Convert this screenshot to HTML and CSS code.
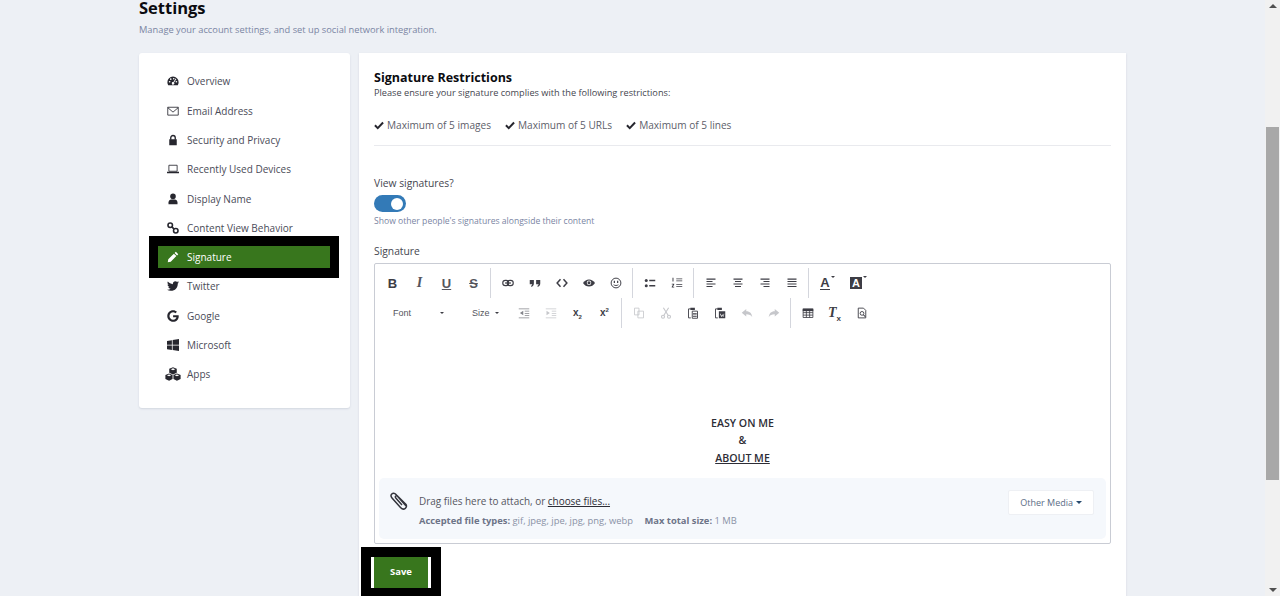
FILE: index.html
```html
<!doctype html>
<html>
<head>
  <title>Settings</title>
  <link rel="stylesheet" href="styles.css">
</head>
<body>
  <svg class="defs" width="0" height="0">
    <symbol id="i-overview" viewBox="0 0 16 16"><path d="M8 2a7.5 7.5 0 0 0-7.5 7.5c0 1.500.4 2.800 1.100 4h12.800c.7-1.200 1.100-2.500 1.100-4A7.500 7.500 0 0 0 8 2z"/><g fill="#fff"><circle cx="3.500" cy="9" r="1.100"/><circle cx="5" cy="5.500" r="1.100"/><circle cx="12.500" cy="9" r="1.100"/><circle cx="9" cy="5" r="1.100"/><path d="M11.500 4.800l1 .6-3.100 4.700a1.700 1.700 0 1 1-1.100-.6z"/></g></symbol>
    <symbol id="i-mail" viewBox="0 0 16 16"><path fill="none" stroke="currentColor" stroke-width="1.100" d="M1 3h14v10.500H1zM1 3.500l7 6 7-6"/></symbol>
    <symbol id="i-lock" viewBox="0 0 16 16"><path d="M3 7h10v8H3z"/><path fill="none" stroke="currentColor" stroke-width="1.800" d="M5 7.500V5a3 3 0 0 1 6 0v2.500"/></symbol>
    <symbol id="i-laptop" viewBox="0 0 16 16"><path fill="none" stroke="currentColor" stroke-width="1.100" d="M2.500 3h11v8h-11z"/><path d="M0 11.500h16V13a.7.7 0 0 1-.7.7H.7A.7.7 0 0 1 0 13z"/></symbol>
    <symbol id="i-user" viewBox="0 0 16 16"><circle cx="8" cy="4.500" r="3.700"/><path d="M2 15v-2.500C2 10 4 8.500 5.500 8.500h5c1.500 0 3.500 1.500 3.500 4V15z"/></symbol>
    <symbol id="i-link" viewBox="0 0 16 16"><g fill="none" stroke="currentColor" stroke-width="2.100"><circle cx="4.300" cy="4.300" r="3"/><circle cx="11.700" cy="11.700" r="3"/><path d="M6.500 6.500l3 3"/></g></symbol>
    <symbol id="i-pencil" viewBox="0 0 16 16"><path d="M11.800 1l3.200 3.200-1.600 1.700-3.300-3.300zM9.200 3.500l3.300 3.300L5 14.300 1 15l.7-4z"/></symbol>
    <symbol id="i-twitter" viewBox="0 0 512 512"><path d="M459.37 151.716c.325 4.548.325 9.097.325 13.645 0 138.72-105.583 298.558-298.558 298.558-59.452 0-114.68-17.219-161.137-47.106 8.447.974 16.568 1.299 25.34 1.299 49.055 0 94.213-16.568 130.274-44.832-46.132-.975-84.792-31.188-98.112-72.772 6.498.974 12.995 1.624 19.818 1.624 9.421 0 18.843-1.3 27.614-3.573-48.081-9.747-84.143-51.98-84.143-102.985v-1.299c13.969 7.797 30.214 12.67 47.431 13.319-28.264-18.843-46.781-51.005-46.781-87.391 0-19.492 5.197-37.36 14.294-52.954 51.655 63.675 129.3 105.258 216.365 109.807-1.624-7.797-2.599-15.918-2.599-24.04 0-57.828 46.782-104.934 104.934-104.934 30.213 0 57.502 12.67 76.67 33.137 23.715-4.548 46.456-13.32 66.599-25.34-7.798 24.366-24.366 44.833-46.132 57.827 21.117-2.273 41.584-8.122 60.426-16.243-14.292 20.791-32.161 39.308-52.628 54.253z"/></symbol>
    <symbol id="i-google" viewBox="0 0 488 512"><path d="M488 261.8C488 403.3 391.1 504 248 504 110.8 504 0 393.2 0 256S110.8 8 248 8c66.8 0 123 24.5 166.3 64.9l-67.5 64.9C258.5 52.6 94.3 116.6 94.3 256c0 86.5 69.1 156.6 153.7 156.6 98.2 0 135-70.4 140.8-106.9H248v-85.3h236.1c2.3 12.7 3.900 24.9 3.900 41.4z"/></symbol>
    <symbol id="i-windows" viewBox="0 0 16 16"><path d="M0 2.500l6.500-1v6H0zM7.500 1.300L16 0v7.500H7.500zM0 8.500h6.500v6l-6.500-1zM7.500 8.500H16V16l-8.500-1.300z"/></symbol>
    <symbol id="i-cubes" viewBox="0 0 18 16"><path d="M9 .3l4.300 1.800v4.600L9 8.500 4.700 6.700V2.100zM9 1.500L6.400 2.500 9 3.600l2.600-1.100zM4.500 7.300l4 1.700v4.800l-4 1.900-4.200-1.900V9zM4.500 8.500L2 9.500l2.500 1 2.500-1zM13.500 7.300l4.200 1.700v4.800l-4.200 1.900-4-1.900V9zM13.500 8.500L11 9.500l2.500 1 2.500-1z" fill-rule="evenodd"/></symbol>
    <symbol id="i-check" viewBox="0 0 16 16"><path fill="none" stroke="currentColor" stroke-width="3.200" d="M1.500 8.500l4.500 4.500 8.500-9"/></symbol>
    <symbol id="i-chain" viewBox="0 0 16 16"><g fill="none" stroke="currentColor" stroke-width="1.500"><rect x="1" y="4.500" width="8" height="7" rx="3.500"/><rect x="7" y="4.500" width="8" height="7" rx="3.500"/><path d="M4 8h8"/></g></symbol>
    <symbol id="i-quote" viewBox="0 0 16 16"><path d="M1 4h5.500v4.500c0 2.500-1.500 4-3.500 4.500l-.5-1.200c1-.4 1.700-1.300 1.800-2.300H1zM9.500 4H15v4.500c0 2.500-1.500 4-3.500 4.500l-.5-1.200c1-.4 1.700-1.300 1.800-2.300H9.500z"/></symbol>
    <symbol id="i-code" viewBox="0 0 16 16"><path fill="none" stroke="currentColor" stroke-width="2" d="M6 3L1.500 8 6 13M10 3l4.500 5-4.500 5"/></symbol>
    <symbol id="i-eye" viewBox="0 0 16 16"><path d="M0 8c2-3 4.800-4.800 8-4.800S14 5 16 8c-2 3-4.800 4.800-8 4.800S2 11 0 8z"/><circle cx="8" cy="7.800" r="3" fill="#fff"/><circle cx="8" cy="7.800" r="2"/></symbol>
    <symbol id="i-smile" viewBox="0 0 16 16"><circle cx="8" cy="8" r="6.500" fill="none" stroke="currentColor" stroke-width="1.300"/><path d="M5 5h1.600v3H5zM9.400 5H11v3H9.400z"/><path fill="none" stroke="currentColor" stroke-width="1.200" d="M4.800 10.300c1.800 1.400 4.600 1.400 6.400 0"/></symbol>
    <symbol id="i-ul" viewBox="0 0 16 16"><circle cx="3" cy="4.500" r="2"/><circle cx="3" cy="11.500" r="2"/><path d="M7 3.500h8v2H7zM7 10.500h8v2H7z"/></symbol>
    <symbol id="i-ol" viewBox="0 0 16 16"><path d="M2 1h1.300v5H2zM1 9h3.300v1.100L2.500 13h1.800v1H1v-1l1.800-3H1zM7 2h8v1H7zM7 4.500h8v1H7zM7 9.500h8v1H7zM7 12h8v1H7z"/></symbol>
    <symbol id="i-left" viewBox="0 0 16 16"><path d="M2 2h12v1.500H2zM2 5.300h8v1.500H2zM2 8.600h12v1.500H2zM2 11.900h8v1.500H2z"/></symbol>
    <symbol id="i-center" viewBox="0 0 16 16"><path d="M2 2h12v1.500H2zM4 5.300h8v1.500H4zM2 8.600h12v1.500H2zM4 11.900h8v1.500H4z"/></symbol>
    <symbol id="i-right" viewBox="0 0 16 16"><path d="M2 2h12v1.500H2zM6 5.300h8v1.500H6zM2 8.600h12v1.500H2zM6 11.900h8v1.500H6z"/></symbol>
    <symbol id="i-justify" viewBox="0 0 16 16"><path d="M2 2h12v1.500H2zM2 5.300h12v1.500H2zM2 8.600h12v1.500H2zM2 11.900h12v1.500H2z"/></symbol>
    <symbol id="i-outdent" viewBox="0 0 16 16"><path d="M1 2h14v1H1zM9 5h6v1H9zM9 8h6v1H9zM9 11h6v1H9zM1 14h14v1H1zM7 5v6L2.500 8z"/></symbol>
    <symbol id="i-indent" viewBox="0 0 16 16"><path d="M1 2h14v1H1zM9 5h6v1H9zM9 8h6v1H9zM9 11h6v1H9zM1 14h14v1H1zM2 5v6l4.500-3z"/></symbol>
    <symbol id="i-copy" viewBox="0 0 16 16"><path fill="none" stroke="currentColor" stroke-width="1.100" d="M2 1.500h6v9H2zM6.500 5.500H14v9H6.500z"/></symbol>
    <symbol id="i-cut" viewBox="0 0 16 16"><g fill="none" stroke="currentColor" stroke-width="1.500"><circle cx="4" cy="13" r="2"/><circle cx="12" cy="13" r="2"/><path d="M5 11.300L11.500 1M11 11.300L4.500 1"/></g></symbol>
    <symbol id="i-paste" viewBox="0 0 16 16"><path fill="none" stroke="currentColor" stroke-width="1.200" d="M5 2.500H2v12h3M7 5.500h7v9.500H7z"/><path d="M4.500 1h6v3h-6zM8 8h5v1H8zM8 10h5v1H8zM8 12h5v1H8z"/></symbol>
    <symbol id="i-pastew" viewBox="0 0 16 16"><path fill="none" stroke="currentColor" stroke-width="1.200" d="M5 2.500H2v12h3"/><path d="M4.500 1h6v3h-6zM6.500 5.500H15V15H6.500z"/><path fill="#fff" d="M8 9h1l1 3 .8-2h.6l.8 2 .8-3h.8l-1.200 4h-.8l-.7-2-.8 2h-.8z"/></symbol>
    <symbol id="i-undo" viewBox="0 0 16 16"><path d="M7 2.500v3c5 0 7.500 3 8 8-1.500-3-4-4-8-4v3L1 7.500z"/></symbol>
    <symbol id="i-redo" viewBox="0 0 16 16"><path d="M9 2.500v3c-5 0-7.500 3-8 8 1.500-3 4-4 8-4v3l6-5z"/></symbol>
    <symbol id="i-table" viewBox="0 0 16 16"><path d="M1 2h14v3.500H1z"/><path fill="none" stroke="currentColor" stroke-width="1.100" d="M1.500 3h13v11h-13zM1.500 7.500h13M1.500 10.800h13M5.800 5v9M10.200 5v9"/></symbol>
    <symbol id="i-preview" viewBox="0 0 16 16"><path fill="none" stroke="currentColor" stroke-width="1.200" d="M3 1.500h7l3 3v10H3z"/><circle cx="8" cy="8.500" r="2.500" fill="none" stroke="currentColor" stroke-width="1.200"/><path fill="none" stroke="currentColor" stroke-width="1.400" d="M10 10.500l2.500 2.500"/></symbol>
    <symbol id="i-clip" viewBox="0 0 20 20"><path fill="none" stroke="currentColor" stroke-width="1.500" d="M16.500 16.500L6 4.500C4.500 2.800 2.800 3 1.800 4s-1 2.500.2 3.900l8.500 9.500c1.500 1.700 3.500 2 4.800 1s1.600-2.800.5-4.200L8 6.500c-.8-1-1.800-1-2.300-.5s-.5 1.300.3 2.200l6 6.800"/></symbol>
  </svg>

  <div class="page">
    <div class="wrap">
      <h1 class="title">Settings</h1>
      <p class="intro">Manage your account settings, and set up social network integration.</p>

      <div class="columns">
        <ul class="side">
          <li><svg class="ico"><use href="#i-overview"/></svg>Overview</li>
          <li><svg class="ico"><use href="#i-mail"/></svg>Email Address</li>
          <li><svg class="ico"><use href="#i-lock"/></svg>Security and Privacy</li>
          <li><svg class="ico"><use href="#i-laptop"/></svg>Recently Used Devices</li>
          <li><svg class="ico"><use href="#i-user"/></svg>Display Name</li>
          <li><svg class="ico"><use href="#i-link"/></svg>Content View Behavior</li>
          <li class="active"><svg class="ico"><use href="#i-pencil"/></svg>Signature</li>
          <li><svg class="ico"><use href="#i-twitter"/></svg>Twitter</li>
          <li><svg class="ico"><use href="#i-google"/></svg>Google</li>
          <li><svg class="ico"><use href="#i-windows"/></svg>Microsoft</li>
          <li><svg class="ico apps"><use href="#i-cubes"/></svg>Apps</li>
        </ul>

        <div class="content">
          <h2 class="subtitle">Signature Restrictions</h2>
          <p class="ensure">Please ensure your signature complies with the following restrictions:</p>
          <div class="limits">
            <span><svg class="tick"><use href="#i-check"/></svg>Maximum of 5 images</span>
            <span><svg class="tick"><use href="#i-check"/></svg>Maximum of 5 URLs</span>
            <span><svg class="tick"><use href="#i-check"/></svg>Maximum of 5 lines</span>
          </div>

          <label class="field first">View signatures?</label>
          <div class="toggle"><div class="knob"></div></div>
          <p class="hint">Show other people's signatures alongside their content</p>

          <label class="field second">Signature</label>
          <div class="editor">
            <div class="bar">
              <div class="group">
                <span class="btn txt bold">B</span>
                <span class="btn txt ital">I</span>
                <span class="btn txt under">U</span>
                <span class="btn txt strike">S</span>
              </div>
              <div class="group">
                <span class="btn"><svg><use href="#i-chain"/></svg></span>
                <span class="btn"><svg><use href="#i-quote"/></svg></span>
                <span class="btn"><svg><use href="#i-code"/></svg></span>
                <span class="btn"><svg><use href="#i-eye"/></svg></span>
                <span class="btn"><svg><use href="#i-smile"/></svg></span>
              </div>
              <div class="group">
                <span class="btn"><svg><use href="#i-ul"/></svg></span>
                <span class="btn"><svg><use href="#i-ol"/></svg></span>
              </div>
              <div class="group">
                <span class="btn"><svg><use href="#i-left"/></svg></span>
                <span class="btn"><svg><use href="#i-center"/></svg></span>
                <span class="btn"><svg><use href="#i-right"/></svg></span>
                <span class="btn"><svg><use href="#i-justify"/></svg></span>
              </div>
              <div class="group last">
                <span class="btn wide txt bold"><span class="under-a">A</span><i class="mini"></i></span>
                <span class="btn wide txt bold"><span class="box-a">A</span><i class="mini"></i></span>
              </div>
            </div>
            <div class="bar">
              <div class="group">
                <span class="pick font">Font<i class="mini"></i></span>
                <span class="pick size">Size<i class="mini"></i></span>
                <span class="btn"><svg class="soft"><use href="#i-outdent"/></svg></span>
                <span class="btn"><svg class="faint"><use href="#i-indent"/></svg></span>
                <span class="btn txt bold small"><span>x<sub>2</sub></span></span>
                <span class="btn txt bold small"><span>x<sup>2</sup></span></span>
              </div>
              <div class="group">
                <span class="btn"><svg class="faint"><use href="#i-copy"/></svg></span>
                <span class="btn"><svg class="faint"><use href="#i-cut"/></svg></span>
                <span class="btn"><svg><use href="#i-paste"/></svg></span>
                <span class="btn"><svg><use href="#i-pastew"/></svg></span>
                <span class="btn"><svg class="faint"><use href="#i-undo"/></svg></span>
                <span class="btn"><svg class="faint"><use href="#i-redo"/></svg></span>
              </div>
              <div class="group last">
                <span class="btn"><svg><use href="#i-table"/></svg></span>
                <span class="btn txt bold clearf"><span><i>T</i><sub>x</sub></span></span>
                <span class="btn"><svg><use href="#i-preview"/></svg></span>
              </div>
            </div>

            <div class="body-text">
              <p>EASY ON ME</p>
              <p>&amp;</p>
              <p><u>ABOUT ME</u></p>
            </div>

            <div class="attach">
              <svg class="clip"><use href="#i-clip"/></svg>
              <div class="attach-text">
                <p class="drag">Drag files here to attach, or <u>choose files...</u></p>
                <p class="types"><b>Accepted file types:</b> gif, jpeg, jpe, jpg, png, webp <b class="max">Max total size:</b> 1 MB</p>
              </div>
              <span class="media">Other Media<i class="caret"></i></span>
            </div>
          </div>

          <div class="save-row"><button class="save">Save</button></div>
        </div>
      </div>
    </div>
  </div>

  <div class="scroll">
    <i class="arrow up"></i>
    <div class="thumb"></div>
    <i class="arrow down"></i>
  </div>
</body>
</html>
```

FILE: styles.css
```css
html, body {
  margin: 0;
  height: 100%;
  overflow: hidden;
}
body {
  display: flex;
  background: #edf0f5;
  color: #2d2d36;
  font-family: "Open Sans", "Noto Sans", sans-serif;
  font-size: 10px;
}
p, h1, h2, ul {
  margin: 0;
  padding: 0;
}
.defs {
  position: absolute;
}
.page {
  flex: 1;
  min-width: 0;
}
.wrap {
  width: 987px;
  margin: 0 auto;
}
.title {
  font-size: 16.500px;
  line-height: 16px;
  font-weight: 700;
  color: #0b0b10;
}
.intro {
  margin-top: 7px;
  font-size: 9.300px;
  line-height: 14px;
  color: #7a85a3;
}
.columns {
  display: flex;
  gap: 9px;
  align-items: flex-start;
  margin-top: 16px;
}

/* side menu */
.side {
  width: 211px;
  box-sizing: border-box;
  padding: 17.400px 20px 22.600px 19px;
  background: #fff;
  border-radius: 3px;
  box-shadow: 0 1px 2px rgba(90, 100, 130, .18);
  list-style: none;
}
.side li {
  display: flex;
  align-items: center;
  height: 22px;
  margin-bottom: 7.3px;
  padding-left: 9px;
  color: #4a4b58;
  font-size: 10px;
}
.side li:last-child {
  margin-bottom: 0;
}
.side .ico {
  flex: none;
  width: 12px;
  height: 12px;
  margin-right: 8px;
  fill: #26262e;
  color: #26262e;
}
.side .apps {
  width: 16px;
  height: 14px;
  margin: 0 6px 0 -2px;
}
.side .active {
  background: #38761d;
  color: #fff;
  outline: 9px solid #000;
  box-shadow: 0 1px 0 9px #000, 0 -1px 0 9px #000;
}
.side .active .ico {
  fill: #fff;
  color: #fff;
}

/* main card */
.content {
  flex: 1;
  box-sizing: border-box;
  height: 560px;
  padding: 17px 15px 0;
  background: #fff;
  box-shadow: 0 1px 2px rgba(90, 100, 130, .18);
}
.subtitle {
  font-size: 12.500px;
  line-height: 16px;
  font-weight: 700;
  color: #0b0b10;
}
.ensure {
  font-size: 9.200px;
  line-height: 13px;
  color: #45464f;
}
.limits {
  display: flex;
  gap: 14px;
  margin-top: 19px;
  padding-bottom: 13px;
  border-bottom: 1px solid #e9eaee;
  font-size: 10.100px;
  line-height: 14px;
  color: #5d5e6a;
}
.limits span {
  display: flex;
  align-items: center;
}
.tick {
  width: 10px;
  height: 10px;
  margin-right: 3px;
  color: #26262e;
}
.field {
  display: block;
  font-size: 10.300px;
  line-height: 14px;
  color: #45464f;
}
.first {
  margin-top: 30px;
}
.second {
  margin-top: 16px;
}
.toggle {
  display: flex;
  justify-content: flex-end;
  align-items: center;
  width: 32px;
  height: 17px;
  margin-top: 5px;
  padding-right: 3px;
  box-sizing: border-box;
  border-radius: 9px;
  background: #337ab7;
}
.knob {
  width: 12px;
  height: 12px;
  border-radius: 50%;
  background: #fff;
}
.hint {
  margin-top: 2px;
  font-size: 8.600px;
  line-height: 14px;
  color: #7a85a3;
}

/* editor */
.editor {
  height: 281px;
  margin-top: 5px;
  padding: 4px 4px 4px;
  box-sizing: border-box;
  border: 1px solid #c9ccd4;
  border-radius: 2px;
  display: flex;
  flex-direction: column;
}
.bar {
  display: flex;
  height: 30px;
  flex: none;
}
.group {
  display: flex;
  align-items: center;
  padding-right: 3px;
  margin-right: 3px;
  border-right: 1px solid #d4d6dd;
}
.group.last {
  border-right: 0;
}
.btn {
  display: flex;
  align-items: center;
  justify-content: center;
  width: 27px;
  height: 30px;
  color: #3d3d45;
  fill: #3d3d45;
}
.btn svg {
  width: 12px;
  height: 12px;
}
.btn .faint {
  color: #c6c7cb;
  fill: #c6c7cb;
}
.btn .soft {
  color: #85868c;
  fill: #85868c;
}
.txt {
  font-family: "Liberation Sans", sans-serif;
  font-size: 13px;
}
.bold {
  font-weight: 700;
}
.ital {
  font-family: "Liberation Serif", serif;
  font-style: italic;
  font-weight: 700;
  font-size: 14px;
  color: #55555d;
}
.under {
  text-decoration: underline;
  font-weight: 700;
  color: #55555d;
}
.strike {
  text-decoration: line-through;
  font-weight: 700;
  color: #55555d;
}
.wide {
  width: 31px;
  position: relative;
}
.under-a {
  border-bottom: 1px solid #3d3d45;
  line-height: 12px;
}
.box-a {
  background: #3d3d45;
  color: #fff;
  padding: 0 2px;
  line-height: 12px;
  font-size: 11px;
}
.mini {
  display: inline-block;
  border: 2px solid transparent;
  border-top-color: #3d3d45;
  border-bottom: 0;
  margin-left: 1px;
}
.wide .mini {
  align-self: flex-start;
  margin-top: 8px;
}
.small {
  font-size: 10px;
}
.small span, .clearf span {
  line-height: 10px;
}
.small sub, .small sup {
  font-size: 6px;
  line-height: 0;
}
.clearf sub {
  font-size: 8px;
  line-height: 0;
}
.clearf i {
  font-family: "Liberation Serif", serif;
  font-size: 14px;
}
.pick {
  display: flex;
  align-items: center;
  justify-content: space-between;
  box-sizing: border-box;
  font-family: "Liberation Sans", sans-serif;
  font-size: 9px;
  color: #55555d;
}
.font {
  width: 83px;
  padding: 0 18px 0 14px;
}
.size {
  width: 48px;
  padding: 0 11px 0 10px;
}
.body-text {
  margin-top: auto;
  margin-bottom: 11px;
  text-align: center;
  font-size: 10.600px;
  font-weight: 600;
  line-height: 17.500px;
  color: #2d2d36;
}
.attach {
  display: flex;
  align-items: flex-start;
  height: 61px;
  flex: none;
  box-sizing: border-box;
  padding: 12px 12px 0 11px;
  background: #f5f8fc;
  border-radius: 5px;
}
.clip {
  flex: none;
  width: 20px;
  height: 20px;
  color: #33343c;
  margin-right: 9px;
}
.attach-text {
  flex: 1;
  padding-top: 4px;
}
.drag {
  font-size: 9.950px;
  line-height: 14px;
  color: #55565f;
}
.drag u {
  color: #2d2d36;
}
.types {
  margin-top: 7px;
  font-size: 9.400px;
  line-height: 12px;
  color: #8a92a6;
}
.types b {
  color: #6d7488;
}
.max {
  margin-left: 9px;
}
.media {
  display: flex;
  align-items: center;
  height: 23px;
  padding: 0 11px;
  background: #fff;
  border: 1px solid #eef0f4;
  border-radius: 2px;
  font-size: 9px;
  color: #5b6d85;
}
.caret {
  display: inline-block;
  margin-left: 3px;
  border: 3px solid transparent;
  border-top-color: #274a6e;
  border-bottom: 0;
}
.save-row {
  margin: 13px 0 0 -3px;
}
.save {
  display: block;
  width: 60px;
  height: 31px;
  padding: 0 0 2px;
  background: #38761d;
  color: #fff;
  border: solid #fff;
  border-width: 0 3px;
  outline: 10px solid #000;
  font-family: "Open Sans", sans-serif;
  font-size: 9.500px;
  font-weight: 700;
}

/* fake scrollbar */
.scroll {
  position: relative;
  flex: none;
  width: 15px;
  height: 100%;
  background: #f1f1f1;
}
.thumb {
  position: absolute;
  top: 127px;
  left: 1px;
  width: 13px;
  height: 353px;
  background: #a8a8a8;
}
.arrow {
  position: absolute;
  left: 4px;
  border: 4px solid transparent;
}
.up {
  top: 4px;
  border-top: 0;
  border-bottom-color: #505050;
}
.down {
  bottom: 4px;
  border-bottom: 0;
  border-top-color: #505050;
}
```
